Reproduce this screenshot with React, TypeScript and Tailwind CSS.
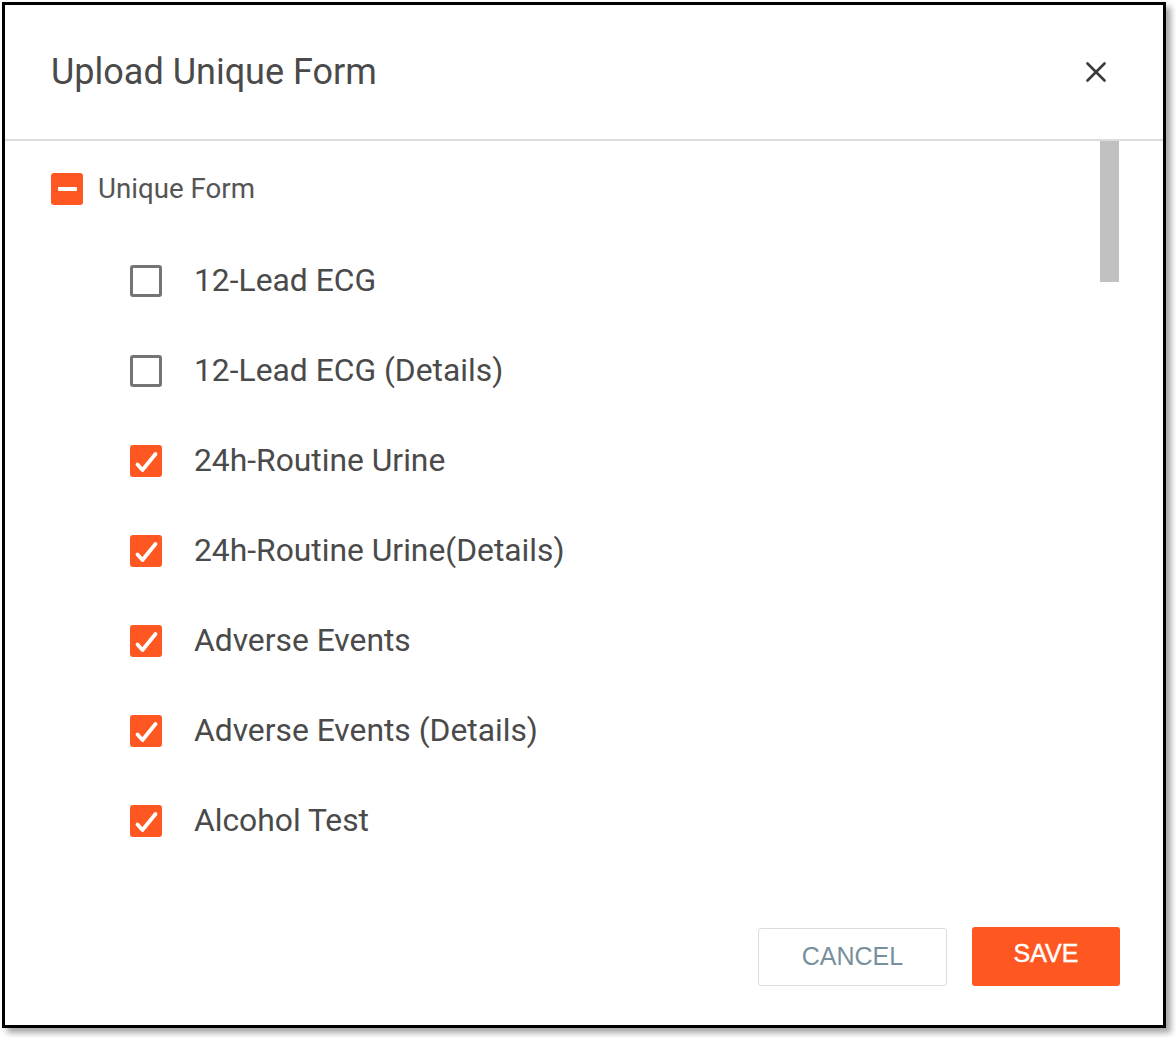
import { useState } from "react";

const FORMS = [
  { label: "12-Lead ECG", checked: false },
  { label: "12-Lead ECG (Details)", checked: false },
  { label: "24h-Routine Urine", checked: true },
  { label: "24h-Routine Urine(Details)", checked: true },
  { label: "Adverse Events", checked: true },
  { label: "Adverse Events (Details)", checked: true },
  { label: "Alcohol Test", checked: true },
];

function CheckBox({ checked }: { checked: boolean }) {
  if (!checked) {
    return <span className="block h-[32px] w-[32px] shrink-0 rounded-[3px] border-[3px] border-[#747474] bg-white" />;
  }
  return (
    <span className="flex h-[32px] w-[32px] shrink-0 items-center justify-center rounded-[3px] bg-[#ff5722]">
      <svg width="32" height="32" viewBox="0 0 32 32" fill="none">
        <path d="M7.5 19.5l5 5.5L25.5 9" stroke="white" strokeWidth="3.8" strokeLinecap="round" strokeLinejoin="round" />
      </svg>
    </span>
  );
}

export default function App() {
  const [items, setItems] = useState(FORMS);

  const toggle = (i: number) =>
    setItems((prev) => prev.map((it, idx) => (idx === i ? { ...it, checked: !it.checked } : it)));

  return (
    <div className="h-[1038px] w-[1176px] bg-white pl-[2px] pt-[2px]" style={{ fontFamily: "Roboto, 'Noto Sans', sans-serif" }}>
      <div className="flex h-[1026px] w-[1164px] flex-col border-[3px] border-black bg-white shadow-[5px_5px_6px_rgba(0,0,0,0.35)]">
        {/* header */}
        <div className="flex h-[136px] shrink-0 items-center justify-between border-b-2 border-[#dcdcdc] pl-[46px] pr-[57px]">
          <h1 className="text-[36px] leading-none text-[#4a4a4a]">Upload Unique Form</h1>
          <button type="button" aria-label="Close" className="flex h-[20px] w-[20px] items-center justify-center">
            <svg width="20" height="20" viewBox="0 0 20 20" fill="none">
              <path d="M1.5 1.5l17 17M18.5 1.5l-17 17" stroke="#3a3a3a" strokeWidth="2.6" strokeLinecap="round" />
            </svg>
          </button>
        </div>

        {/* body */}
        <div className="flex min-h-0 flex-1">
          <div className="flex-1 pl-[46px]">
            <div className="mt-[32px] flex h-[32px] items-center gap-[15px]">
              <span className="flex h-[32px] w-[32px] items-center justify-center rounded-[3px] bg-[#ff5722]">
                <span className="block h-[4px] w-[19px] rounded-[1px] bg-white" />
              </span>
              <span className="text-[27.7px] leading-none text-[#555]">Unique Form</span>
            </div>
            <div className="ml-[79px] mt-[31px] flex flex-col">
              {items.map((it, i) => (
                <div key={it.label} className="flex h-[90px] cursor-pointer items-center gap-[32px]" onClick={() => toggle(i)}>
                  <CheckBox checked={it.checked} />
                  <span className="text-[31.8px] leading-none text-[#4a4a4a]">{it.label}</span>
                </div>
              ))}
            </div>
          </div>
          {/* scrollbar */}
          <div className="mr-[44px] w-[19px] shrink-0">
            <div className="h-[141px] w-full bg-[#c1c1c1]" />
          </div>
        </div>

        {/* footer */}
        <div className="flex shrink-0 items-end justify-end gap-[25px] pb-[39px] pr-[43px]" style={{ fontFamily: "'Liberation Sans', Arial, sans-serif" }}>
          <button type="button" className="h-[58px] w-[189px] rounded-[3px] border border-[#dcdcdc] bg-white text-[25px] text-[#78909c]">
            CANCEL
          </button>
          <button type="button" className="h-[59px] w-[148px] rounded-[3px] bg-[#ff5722] pb-[5px] text-[25px] text-white [-webkit-text-stroke:0.4px_white]">
            SAVE
          </button>
        </div>
      </div>
    </div>
  );
}
